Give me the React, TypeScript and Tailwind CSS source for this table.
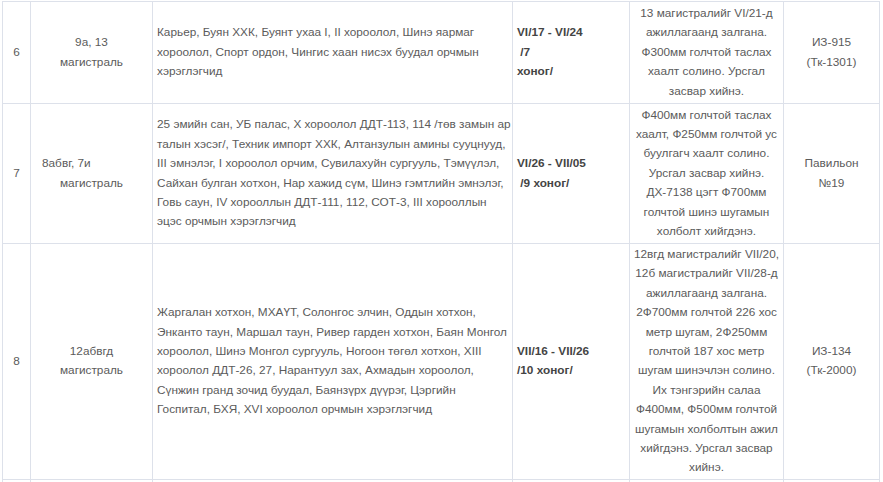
import React from "react";

const cell = "border border-[#dde1ea] align-middle";

const Lines = ({ lines }: { lines: string[] }) => (
  <>
    {lines.map((l, i) => (
      <React.Fragment key={i}>
        {l}
        {i < lines.length - 1 && <br />}
      </React.Fragment>
    ))}
  </>
);

type Row = {
  n: string;
  name: React.ReactNode;
  area: string[];
  date: string[];
  work: string[];
  place: string[];
};

const rows: Row[] = [
  {
    n: "6",
    name: (
      <div className="text-center">
        9а, 13
        <br />
        магистраль
      </div>
    ),
    area: [
      "Карьер, Буян ХХК, Буянт ухаа I, II хороолол, Шинэ яармаг",
      "хороолол, Спорт ордон, Чингис хаан нисэх буудал орчмын",
      "хэрэглэгчид",
    ],
    date: ["VI/17 - VI/24", "\u00a0/7", "хоног/"],
    work: [
      "13 магистралийг VI/21-д",
      "ажиллагаанд залгана.",
      "Ф300мм голчтой таслах",
      "хаалт солино. Урсгал",
      "засвар хийнэ.",
    ],
    place: ["ИЗ-915", "(Тк-1301)"],
  },
  {
    n: "7",
    name: (
      <div>
        <div className="pl-[6px]">8абвг, 7и</div>
        <div className="text-center">магистраль</div>
      </div>
    ),
    area: [
      "25 эмийн сан, УБ палас, Х хороолол ДДТ-113, 114 /төв замын ар",
      "талын хэсэг/, Техник импорт ХХК, Алтанзулын амины сууцнууд,",
      "III эмнэлэг, I хороолол орчим, Сувилахуйн сургууль, Тэмүүлэл,",
      "Сайхан булган хотхон, Нар хажид сүм, Шинэ гэмтлийн эмнэлэг,",
      "Говь саун, IV хорооллын ДДТ-111, 112, СОТ-3, III хорооллын",
      "эцэс орчмын хэрэглэгчид",
    ],
    date: ["VI/26 - VII/05", "\u00a0/9 хоног/"],
    work: [
      "Ф400мм голчтой таслах",
      "хаалт, Ф250мм голчтой ус",
      "буулгагч хаалт солино.",
      "Урсгал засвар хийнэ.",
      "ДХ-7138 цэгт Ф700мм",
      "голчтой шинэ шугамын",
      "холболт хийгдэнэ.",
    ],
    place: ["Павильон", "№19"],
  },
  {
    n: "8",
    name: (
      <div className="text-center">
        12абвгд
        <br />
        магистраль
      </div>
    ),
    area: [
      "Жаргалан хотхон, МХАҮТ, Солонгос элчин, Оддын хотхон,",
      "Энканто таун, Маршал таун, Ривер гарден хотхон, Баян Монгол",
      "хороолол, Шинэ Монгол сургууль, Ногоон төгөл хотхон, XIII",
      "хороолол ДДТ-26, 27, Нарантуул зах, Ахмадын хороолол,",
      "Сүнжин гранд зочид буудал, Баянзүрх дүүрэг, Цэргийн",
      "Госпитал, БХЯ, XVI хороолол орчмын хэрэглэгчид",
    ],
    date: ["VII/16 - VII/26", "/10 хоног/"],
    work: [
      "12вгд магистралийг VII/20,",
      "12б магистралийг VII/28-д",
      "ажиллагаанд залгана.",
      "2Ф700мм голчтой 226 хос",
      "метр шугам, 2Ф250мм",
      "голчтой 187 хос метр",
      "шугам шинэчлэн солино.",
      "Их тэнгэрийн салаа",
      "Ф400мм, Ф500мм голчтой",
      "шугамын холболтын ажил",
      "хийгдэнэ. Урсгал засвар",
      "хийнэ.",
    ],
    place: ["ИЗ-134", "(Тк-2000)"],
  },
];

export default function App() {
  return (
    <div className="w-[883px] h-[482px] overflow-hidden bg-white pl-[2px] pt-[1px]">
      <table
        className="table-fixed border-collapse text-[11.8px] leading-[19.4px] text-[#5b5b5b]"
        style={{ fontFamily: '"Liberation Sans", Arial, sans-serif', width: 877 }}
      >
        <colgroup>
          <col style={{ width: 28 }} />
          <col style={{ width: 122 }} />
          <col style={{ width: 360 }} />
          <col style={{ width: 117 }} />
          <col style={{ width: 154 }} />
          <col style={{ width: 96 }} />
        </colgroup>
        <tbody>
          {rows.map((r, i) => (
            <tr key={r.n} className={i === 0 ? "h-[102px]" : i === 1 ? "h-[140px]" : "h-[235px]"}>
              <td className={`${cell} text-center`}>{r.n}</td>
              <td className={`${cell} px-[5px]`}>{r.name}</td>
              <td className={`${cell} px-[4px] py-[1px] whitespace-nowrap`}>
                <Lines lines={r.area} />
              </td>
              <td className={`${cell} px-[4px] font-bold text-[#444] whitespace-nowrap`}>
                <Lines lines={r.date} />
              </td>
              <td className={`${cell} px-[2px] py-[1px] text-center whitespace-nowrap`}>
                <Lines lines={r.work} />
              </td>
              <td className={`${cell} text-center`}>
                <Lines lines={r.place} />
              </td>
            </tr>
          ))}
          <tr className="h-[40px]">
            <td className={cell}></td>
            <td className={cell}></td>
            <td className={cell}></td>
            <td className={cell}></td>
            <td className={cell}></td>
            <td className={cell}></td>
          </tr>
        </tbody>
      </table>
    </div>
  );
}
